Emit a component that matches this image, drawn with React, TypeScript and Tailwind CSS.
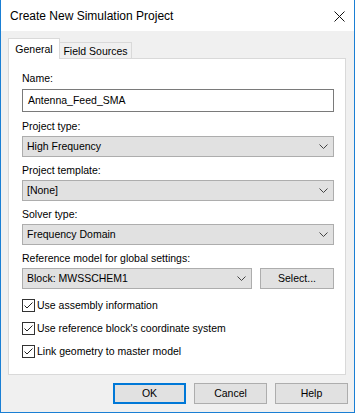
import React from 'react';

const Chevron = () => (
  <svg width="9" height="5" viewBox="0 0 9 5" className="shrink-0">
    <path d="M0.5 0.5 L4.5 4.5 L8.5 0.5" fill="none" stroke="#444" strokeWidth="1" />
  </svg>
);

const Select = ({ value, className = '' }: { value: string; className?: string }) => (
  <div
    className={`flex h-[21px] items-center justify-between border border-[#adadad] bg-[#e1e1e1] pl-[4px] pr-[5px] ${className}`}
  >
    <span>{value}</span>
    <Chevron />
  </div>
);

const Checkbox = ({ label }: { label: string }) => (
  <div className="flex h-[23px] items-center">
    <div className="flex h-[13px] w-[13px] items-center justify-center border border-[#333] bg-white">
      <svg width="11" height="11" viewBox="0 0 11 11">
        <path d="M1.5 5.5 L4 8 L9.5 2.5" fill="none" stroke="#222" strokeWidth="1" />
      </svg>
    </div>
    <span className="ml-[2px]">{label}</span>
  </div>
);

const Label = ({ children, className = '' }: { children: React.ReactNode; className?: string }) => (
  <div className={`h-4 leading-4 ${className}`}>{children}</div>
);

export default function App() {
  return (
    <div className="h-[413px] w-[355px] overflow-hidden border-x border-b border-[#1a7fd4] bg-[#f0f0f0] font-['Liberation_Sans',Arial,sans-serif] text-[10.5px] text-black">
      {/* Title bar */}
      <div className="flex h-[31px] items-center justify-between bg-white pl-[9px] pr-[9px]">
        <span className="text-[12px]">Create New Simulation Project</span>
        <svg width="11" height="11" viewBox="0 0 11 11" className="mt-[1px]">
          <path d="M0.5 0.5 L10.5 10.5 M10.5 0.5 L0.5 10.5" fill="none" stroke="#111" strokeWidth="1" />
        </svg>
      </div>

      {/* Tabs */}
      <div className="ml-[7px] mt-[7px] flex items-end">
        <div className="relative z-10 -mb-px flex h-[21px] w-[52px] items-start justify-center whitespace-nowrap border-x border-t border-[#d9d9d9] bg-white pt-[3px]">
          General
        </div>
        <div className="flex h-[16px] w-[72px] items-center justify-center whitespace-nowrap border-r border-t border-[#d9d9d9] bg-[#f0f0f0] pt-[2px]">
          Field Sources
        </div>
      </div>

      {/* Panel */}
      <div className="relative ml-[7px] flex h-[317px] w-[338px] flex-col border border-[#d9d9d9] bg-white pl-[13px] pr-[11px] pt-[11px]">
        <Label>Name:</Label>
        <div className="mt-[3px] flex h-[23px] items-center border border-[#7a7a7a] bg-white pl-[5px]">
          Antenna_Feed_SMA
        </div>

        <Label className="mt-[6px]">Project type:</Label>
        <Select value="High Frequency" className="mt-[2px]" />

        <Label className="mt-[5px]">Project template:</Label>
        <Select value="[None]" className="mt-[2px]" />

        <Label className="mt-[5px]">Solver type:</Label>
        <Select value="Frequency Domain" className="mt-[2px]" />

        <Label className="mt-[5px]">Reference model for global settings:</Label>
        <div className="mt-[2px] flex gap-[8px]">
          <Select value="Block: MWSSCHEM1" className="w-[230px]" />
          <div className="flex h-[21px] flex-1 items-center justify-center border border-[#adadad] bg-[#e1e1e1]">
            Select...
          </div>
        </div>

        <div className="mt-[5px] flex flex-col">
          <Checkbox label="Use assembly information" />
          <Checkbox label="Use reference block's coordinate system" />
          <Checkbox label="Link geometry to master model" />
        </div>
      </div>

      {/* Buttons */}
      <div className="mt-[8px] flex justify-end gap-[8px] pr-[6px]">
        <div className="flex h-[21px] w-[73px] items-center justify-center border-2 border-[#0078d7] bg-[#e1e1e1]">
          OK
        </div>
        <div className="flex h-[21px] w-[73px] items-center justify-center border border-[#adadad] bg-[#e1e1e1]">
          Cancel
        </div>
        <div className="flex h-[21px] w-[73px] items-center justify-center border border-[#adadad] bg-[#e1e1e1]">
          Help
        </div>
      </div>
    </div>
  );
}
